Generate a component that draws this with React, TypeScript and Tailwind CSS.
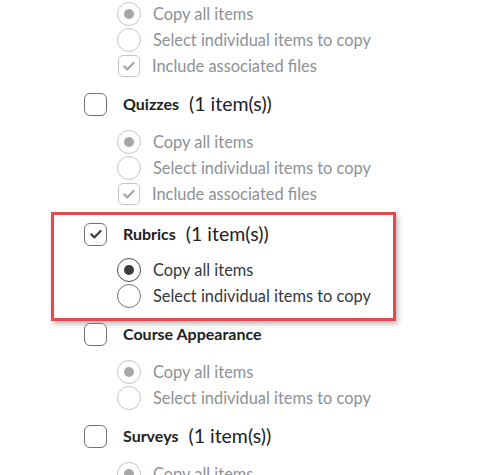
import React from "react";

type Opt = { kind: "radio" | "check"; label: string; checked?: boolean };

type Section = {
  title?: string;
  count?: string;
  checked?: boolean;
  active?: boolean;
  highlight?: boolean;
  options: Opt[];
};

const threeOpts: Opt[] = [
  { kind: "radio", label: "Copy all items", checked: true },
  { kind: "radio", label: "Select individual items to copy" },
  { kind: "check", label: "Include associated files", checked: true },
];

const twoOpts: Opt[] = [
  { kind: "radio", label: "Copy all items", checked: true },
  { kind: "radio", label: "Select individual items to copy" },
];

const sections: Section[] = [
  { options: threeOpts },
  { title: "Quizzes", count: "(1 item(s))", options: threeOpts },
  { title: "Rubrics", count: "(1 item(s))", checked: true, active: true, highlight: true, options: twoOpts },
  { title: "Course Appearance", options: twoOpts },
  { title: "Surveys", count: "(1 item(s))", options: twoOpts },
];

function CheckMark({ color }: { color: string }) {
  return (
    <svg viewBox="0 0 24 24" className="h-[16px] w-[16px]" fill="none">
      <path d="M5 12.5l4.5 4.5L19 7.5" stroke={color} strokeWidth="3.4" strokeLinecap="round" strokeLinejoin="round" />
    </svg>
  );
}

function HeaderBox({ checked }: { checked?: boolean }) {
  return (
    <div className="flex h-[23px] w-[23px] shrink-0 items-center justify-center rounded-[6px] border-[1.5px] border-[#6f7477] bg-white">
      {checked ? <CheckMark color="#3f4245" /> : null}
    </div>
  );
}

function OptionRow({ opt, active }: { opt: Opt; active?: boolean }) {
  const ring = active ? (opt.checked ? "border-[#494c4e]" : "border-[#6f7477]") : "border-[#c2c5c8]";
  return (
    <div className="flex h-[26px] items-center">
      {opt.kind === "radio" ? (
        <div className={`flex h-[24px] w-[24px] shrink-0 items-center justify-center rounded-full border-[1.5px] bg-white ${ring}`}>
          {opt.checked ? (
            <div className={`h-[10px] w-[10px] rounded-full ${active ? "bg-[#3a3d40]" : "bg-[#a5a8ab]"}`} />
          ) : null}
        </div>
      ) : (
        <div className="ml-px flex h-[22px] w-[22px] shrink-0 items-center justify-center rounded-[5px] border-[1.5px] border-[#c2c5c8] bg-white">
          <CheckMark color="#a5a8ab" />
        </div>
      )}
      <span className={`ml-3 text-[16.4px] ${active ? "text-[#35383b]" : "text-[#8d9195]"}`}>{opt.label}</span>
    </div>
  );
}

function SectionBlock({ section, first }: { section: Section; first?: boolean }) {
  return (
    <div className={`relative ${first ? "" : section.highlight ? "mt-[15px]" : "mt-[13px]"}`}>
      {section.highlight ? (
        <div className="pointer-events-none absolute -top-2.5 -bottom-[12px] -left-[33px] w-[345px] border-[3.5px] border-[#e5484d] shadow-[2px_3px_5px_rgba(0,0,0,0.28)]" />
      ) : null}
      {section.title ? (
        <div className={`${section.highlight ? "mb-[11px]" : "mb-[13px]"} flex h-6 items-center`}>
          <HeaderBox checked={section.checked} />
          <span className="ml-4 text-[16px] font-bold text-[#202122]">{section.title}</span>
          {section.count ? <span className="ml-2.5 text-[19.5px] text-[#202122]">{section.count}</span> : null}
        </div>
      ) : null}
      <div className="ml-[33px] flex flex-col">
        {section.options.map((o, i) => (
          <OptionRow key={i} opt={o} active={section.active} />
        ))}
      </div>
    </div>
  );
}

export default function App() {
  return (
    <div className="h-[475px] w-[501px] overflow-hidden bg-white font-['Lato',sans-serif]">
      <div className="flex flex-col pl-[84px] pt-px">
        {sections.map((s, i) => (
          <SectionBlock key={i} section={s} first={i === 0} />
        ))}
      </div>
    </div>
  );
}
